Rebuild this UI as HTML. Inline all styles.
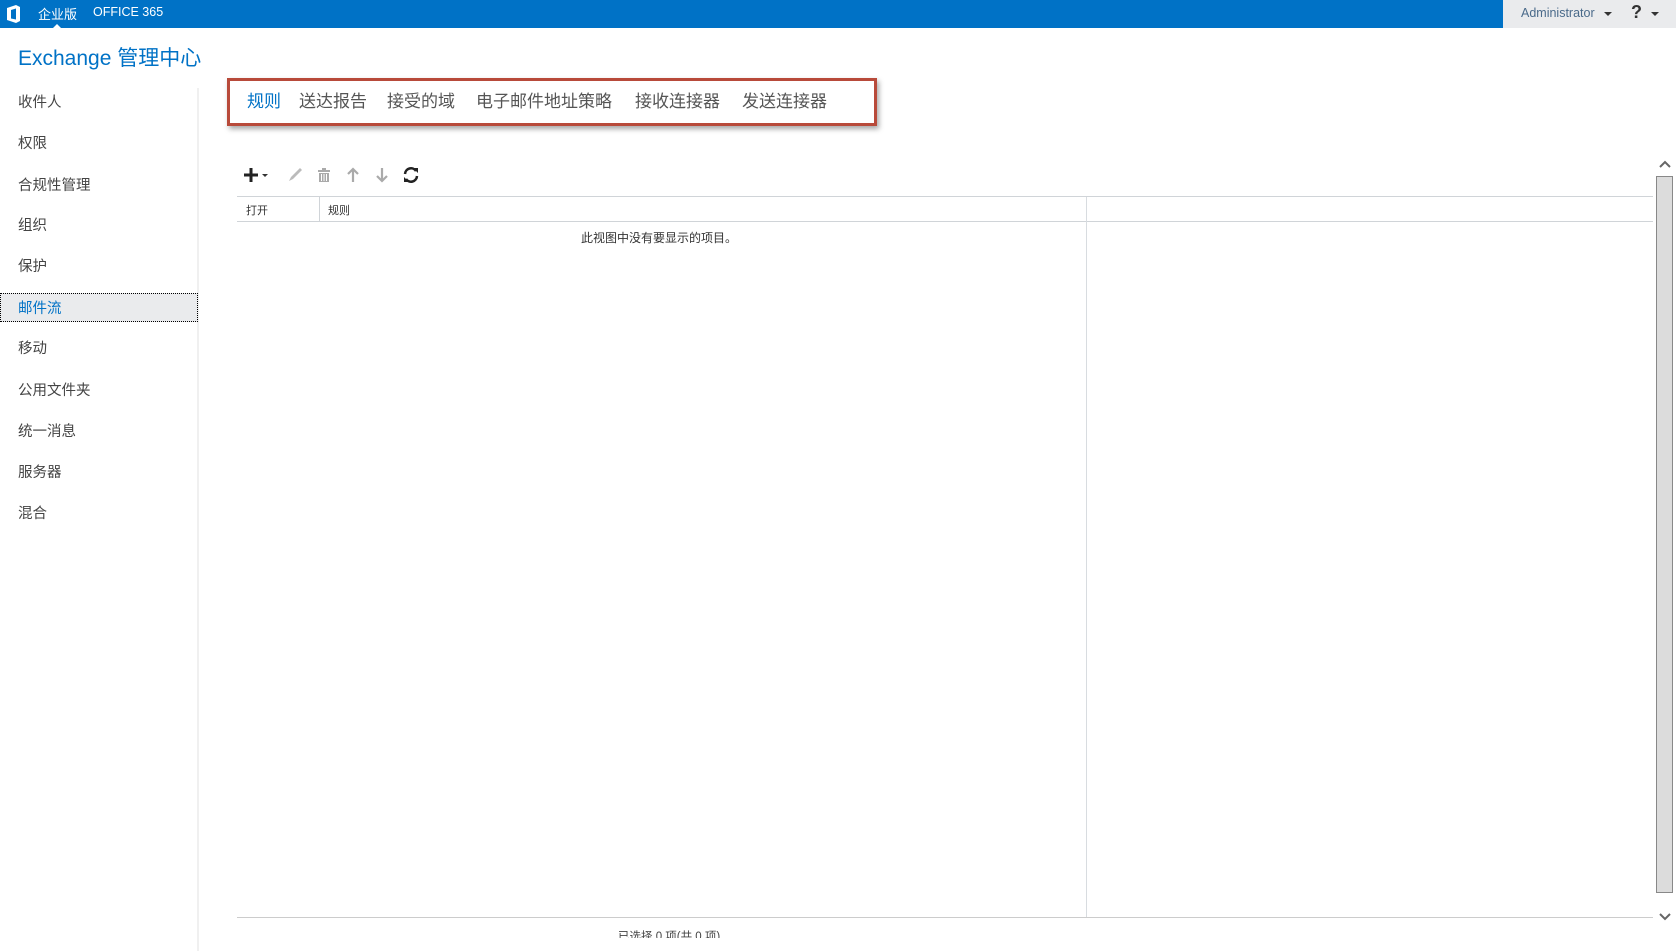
<!DOCTYPE html>
<html><head><meta charset="utf-8"><style>
*{margin:0;padding:0;box-sizing:border-box}
body{width:1676px;height:951px;overflow:hidden;background:#fff;font-family:"Liberation Sans","Noto Sans CJK SC",sans-serif;position:relative}
.a{position:absolute;white-space:nowrap}
.nav{position:absolute;left:18px;font-size:14.5px;color:#444}
.tab{position:absolute;top:87px;font-size:17px;color:#555}
</style></head><body>
<div class="a" style="left:0;top:0;width:1676px;height:28px;background:#0072c6"></div>
<div class="a" style="left:1503px;top:0;width:173px;height:28px;background:#eaebed"></div>
<svg class="a" style="left:6px;top:4px" width="16" height="20" viewBox="0 0 16 20"><path d="M1 4 L10 1 L14 3 L14 17 L10 19 L1 16 Z M5 6 L10 4.5 L10 15.5 L5 14.5 Z" fill="#fff" fill-rule="evenodd"/></svg>
<div class="a" style="left:38px;top:4px;font-size:13px;color:#fff">企业版</div>
<div class="a" style="left:53px;top:24px;width:0;height:0;border-left:4px solid transparent;border-right:4px solid transparent;border-bottom:4px solid #fff"></div>
<div class="a" style="left:93px;top:5px;font-size:12.5px;color:#fff">OFFICE 365</div>
<div class="a" style="left:1521px;top:6px;font-size:12.5px;color:#4a6a8a">Administrator</div>
<div class="a" style="left:1604px;top:12px;border-left:4px solid transparent;border-right:4px solid transparent;border-top:4px solid #333"></div>
<div class="a" style="left:1631px;top:2px;font-size:18px;font-weight:bold;color:#333">?</div>
<div class="a" style="left:1651px;top:12px;border-left:4px solid transparent;border-right:4px solid transparent;border-top:4px solid #333"></div>

<div class="a" style="left:18px;top:42px;font-size:21px;color:#0072c6">Exchange 管理中心</div>

<div class="a" style="left:197px;top:88px;width:2px;height:863px;background:#f0f0f0"></div>
<div class="a" style="left:0;top:293px;width:198px;height:29px;background:#eaebed;border:1px dotted #000"></div>
<div class="nav" style="top:91px">收件人</div>
<div class="nav" style="top:132px">权限</div>
<div class="nav" style="top:174px">合规性管理</div>
<div class="nav" style="top:214px">组织</div>
<div class="nav" style="top:255px">保护</div>
<div class="nav" style="top:297px;color:#0072c6">邮件流</div>
<div class="nav" style="top:337px">移动</div>
<div class="nav" style="top:379px">公用文件夹</div>
<div class="nav" style="top:420px">统一消息</div>
<div class="nav" style="top:461px">服务器</div>
<div class="nav" style="top:502px">混合</div>

<div class="a" style="left:227px;top:78px;width:650px;height:48px;border:3px solid #b84a3a;box-shadow:2px 3px 5px rgba(0,0,0,.35)"></div>
<div class="tab" style="left:247px;color:#0072c6">规则</div>
<div class="tab" style="left:299px">送达报告</div>
<div class="tab" style="left:387px">接受的域</div>
<div class="tab" style="left:476px">电子邮件地址策略</div>
<div class="tab" style="left:635px">接收连接器</div>
<div class="tab" style="left:742px">发送连接器</div>

<svg class="a" style="left:240px;top:165px" width="200" height="20" viewBox="0 0 200 20">
<path d="M4 10H18M11 3V17" stroke="#222" stroke-width="3"/>
<path d="M22 9H28L25 12Z" fill="#333"/>
<path d="M49 16L51 12L60 3L62 5L53 14Z" fill="#bbb"/>
<g fill="#aaa"><rect x="78" y="5" width="12" height="2"/><rect x="82" y="3" width="4" height="2"/><path d="M79 8H89V17H79ZM81 9V16H82V9ZM83.5 9V16H84.5V9ZM86 9V16H87V9Z" fill-rule="evenodd"/></g>
<path d="M113 17V5M108 9L113 4L118 9" stroke="#aaa" stroke-width="2.2" fill="none"/>
<path d="M142 3V15M137 11L142 16L147 11" stroke="#aaa" stroke-width="2.2" fill="none"/>
<path d="M165 9A6 6 0 0 1 176 6M177 11A6 6 0 0 1 166 14" stroke="#222" stroke-width="2.5" fill="none"/>
<path d="M173 3L178 3L178 8Z M169 17L164 17L164 12Z" fill="#222"/>
</svg>

<div class="a" style="left:237px;top:196px;width:1416px;height:1px;background:#d0d4d8"></div>
<div class="a" style="left:237px;top:221px;width:1416px;height:1px;background:#d0d4d8"></div>
<div class="a" style="left:319px;top:197px;width:1px;height:24px;background:#d0d4d8"></div>
<div class="a" style="left:1086px;top:197px;width:1px;height:720px;background:#d8dce0"></div>
<div class="a" style="left:246px;top:202px;font-size:11px;color:#333">打开</div>
<div class="a" style="left:328px;top:202px;font-size:11px;color:#333">规则</div>
<div class="a" style="left:581px;top:229px;font-size:12px;color:#333">此视图中没有要显示的项目。</div>
<div class="a" style="left:237px;top:917px;width:1416px;height:1px;background:#ccc"></div>
<div class="a" style="left:618px;top:929px;height:9px;overflow:hidden;font-size:11.5px;color:#444;line-height:16px">已选择 0 项(共 0 项)</div>

<div class="a" style="left:1656px;top:176px;width:17px;height:717px;background:#dcdcdc;border:1px solid #888"></div>
<svg class="a" style="left:1658px;top:158px" width="14" height="12"><path d="M2 9L7 4L12 9" stroke="#666" stroke-width="2" fill="none"/></svg>
<svg class="a" style="left:1658px;top:911px" width="14" height="12"><path d="M2 3L7 8L12 3" stroke="#666" stroke-width="2" fill="none"/></svg>
</body></html>
